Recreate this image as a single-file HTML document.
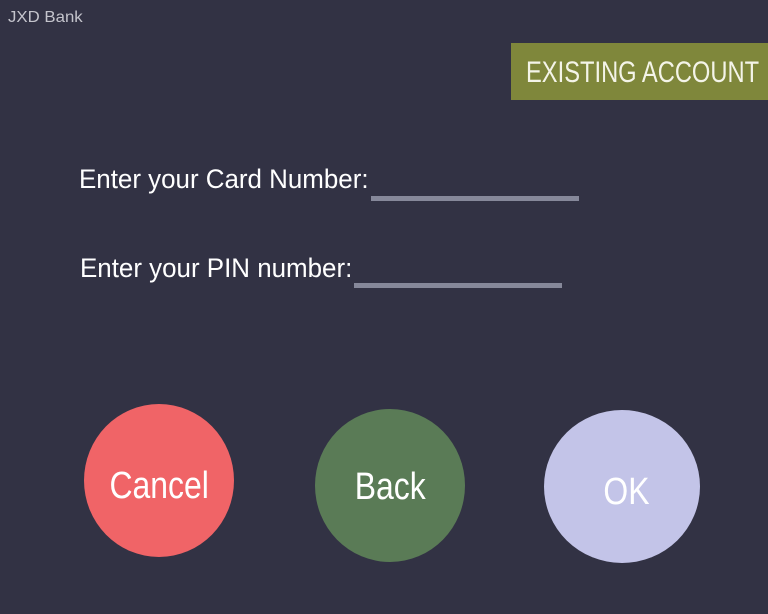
<!DOCTYPE html>
<html><head><meta charset="utf-8"><style>
html,body{margin:0;padding:0}
body{width:768px;height:614px;background:#323244;position:relative;overflow:hidden;font-family:"Liberation Sans","DejaVu Sans",sans-serif;color:#fff}
.t{position:absolute;white-space:nowrap;transform-origin:0 0;line-height:1}
.c{position:absolute;border-radius:50%}
.bt{position:absolute;left:0;right:0;text-align:center;line-height:1}
.bt span{display:inline-block;transform:scaleX(0.84)}
.ln{position:absolute;background:#86889a;height:5px}
</style></head><body>
<div class="t" style="left:8px;top:10px;font-size:16px;color:#c4c4cc;transform:scaleX(1.05)">JXD Bank</div>
<div style="position:absolute;left:511px;top:43px;width:257px;height:57px;background:#7f873b"></div>
<div class="t" style="left:526px;top:58px;font-size:30px;color:#f4f4e8;transform:scaleX(0.79)">EXISTING ACCOUNT</div>
<div class="t" style="left:79px;top:166px;font-size:27px;transform:scaleX(0.96)">Enter your Card Number:</div>
<div class="ln" style="left:371px;top:196px;width:208px"></div>
<div class="t" style="left:80px;top:255px;font-size:27px;transform:scaleX(0.96)">Enter your PIN number:</div>
<div class="ln" style="left:354px;top:283px;width:208px"></div>
<div class="c" style="left:84px;top:404px;width:150px;height:153px;background:#f06467"><div class="bt" style="top:63px;font-size:38px"><span>Cancel</span></div></div>
<div class="c" style="left:315px;top:409px;width:150px;height:153px;background:#5a7b56"><div class="bt" style="top:59px;font-size:38px"><span>Back</span></div></div>
<div class="c" style="left:544px;top:410px;width:156px;height:153px;background:#c3c4e8"><div class="bt" style="top:63px;font-size:38px;left:8px"><span>OK</span></div></div>
</body></html>
